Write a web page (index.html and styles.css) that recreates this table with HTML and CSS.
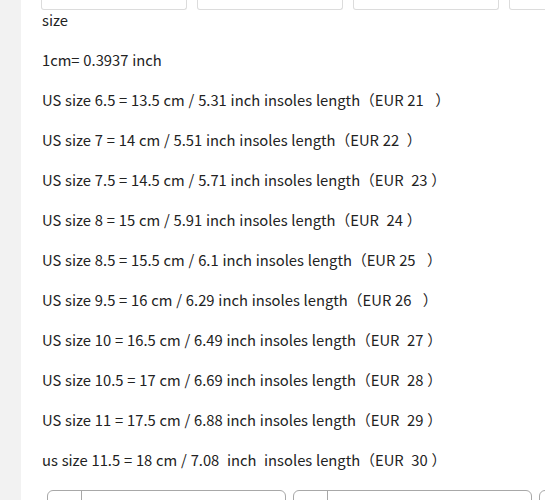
FILE: index.html
```html
<!DOCTYPE html>
<html>
<head>
<meta charset="utf-8">
<link rel="stylesheet" href="styles.css">
</head>
<body>
<div class="page">
  <div class="rail"></div>
  <div class="content">
    <div class="top-row">
      <div class="top-box"></div>
      <div class="top-box"></div>
      <div class="top-box"></div>
      <div class="top-box"></div>
    </div>
    <div class="lines">
      <p class="line first">size</p>
      <p class="line">1cm= 0.3937 inch</p>
      <p class="line">US size 6.5 = 13.5 cm / 5.31 inch insoles length（EUR 21&nbsp;&nbsp;&nbsp;）</p>
      <p class="line">US size 7 = 14 cm / 5.51 inch insoles length（EUR 22&nbsp;&nbsp;）</p>
      <p class="line">US size 7.5 = 14.5 cm / 5.71 inch insoles length（EUR&nbsp;&nbsp;23&nbsp;）</p>
      <p class="line">US size 8 = 15 cm / 5.91 inch insoles length（EUR&nbsp;&nbsp;24&nbsp;）</p>
      <p class="line">US size 8.5 = 15.5 cm / 6.1 inch insoles length（EUR 25&nbsp;&nbsp;&nbsp;）</p>
      <p class="line">US size 9.5 = 16 cm / 6.29 inch insoles length（EUR 26&nbsp;&nbsp;&nbsp;）</p>
      <p class="line">US size 10 = 16.5 cm / 6.49 inch insoles length（EUR&nbsp;&nbsp;27&nbsp;）</p>
      <p class="line">US size 10.5 = 17 cm / 6.69 inch insoles length（EUR&nbsp;&nbsp;28&nbsp;）</p>
      <p class="line">US size 11 = 17.5 cm / 6.88 inch insoles length（EUR&nbsp;&nbsp;29&nbsp;）</p>
      <p class="line">us size 11.5 = 18 cm / 7.08&nbsp;&nbsp;inch&nbsp;&nbsp;insoles length（EUR&nbsp;&nbsp;30&nbsp;）</p>
    </div>
    <div class="bottom-row">
      <div class="field"><span class="field-icon"></span><span class="field-body"></span></div>
      <div class="field"><span class="field-icon"></span><span class="field-body"></span></div>
      <div class="field"><span class="field-icon"></span><span class="field-body"></span></div>
    </div>
  </div>
</div>
</body>
</html>
```

FILE: styles.css
```css
html, body {
  margin: 0;
  padding: 0;
  background: #ffffff;
  overflow: hidden;
}
.page {
  display: flex;
  width: 545px;
  height: 500px;
  overflow: hidden;
}
.rail {
  flex: 0 0 21px;
  background: #f2f2f2;
}
.content {
  flex: 1;
  min-width: 0;
  padding-left: 20px;
}
.top-row {
  display: flex;
  gap: 10px;
  height: 10px;
}
.top-box {
  flex: 0 0 144px;
  height: 9px;
  border: 1px solid #dcdcdc;
  border-top: none;
  border-radius: 0 0 3px 3px;
  box-sizing: content-box;
}
.lines {
  font-family: "Noto Sans CJK SC", "Noto Sans", sans-serif;
  font-size: 14.75px;
  color: #222222;
  word-spacing: 0.5px;
}
.line {
  margin: 20px 0 0 1px;
  line-height: 20px;
  height: 20px;
  white-space: nowrap;
}
.line.first {
  margin-top: 0;
}
.bottom-row {
  display: flex;
  gap: 7px;
  margin-top: 20px;
  margin-left: 6px;
}
.field {
  flex: 0 0 237px;
  height: 30px;
  border: 1px solid #a8a8a8;
  border-radius: 6px;
  display: flex;
}
.field-icon {
  flex: 0 0 33px;
  border-right: 1px solid #a8a8a8;
}
.field-body {
  flex: 1;
}
```
